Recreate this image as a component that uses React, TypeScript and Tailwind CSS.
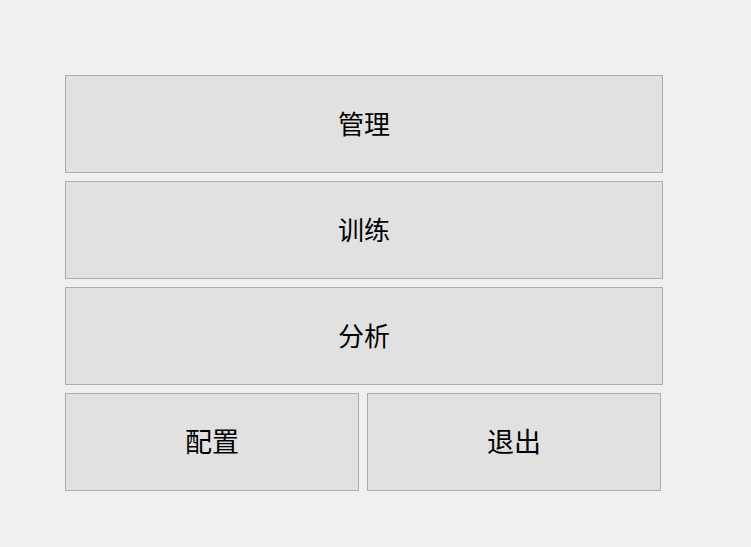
const btn =
  'flex items-center justify-center h-[98px] pb-[3px] bg-[#e1e1e1] border border-[#adadad] text-black leading-none';

export default function App() {
  return (
    <div
      className="w-[751px] h-[547px] bg-[#f0f0f0] pt-[75px] pl-[65px]"
      style={{ fontFamily: '"Noto Sans CJK SC", "Noto Sans", sans-serif' }}
    >
      <div className="flex flex-col gap-[8px] w-[598px]">
        <button className={`${btn} text-[26px]`}>管理</button>
        <button className={`${btn} text-[26px]`}>训练</button>
        <button className={`${btn} text-[26px]`}>分析</button>
        <div className="flex gap-[8px]">
          <button className={`${btn} w-[294px] text-[27px]`}>配置</button>
          <button className={`${btn} w-[294px] text-[27px]`}>退出</button>
        </div>
      </div>
    </div>
  );
}
